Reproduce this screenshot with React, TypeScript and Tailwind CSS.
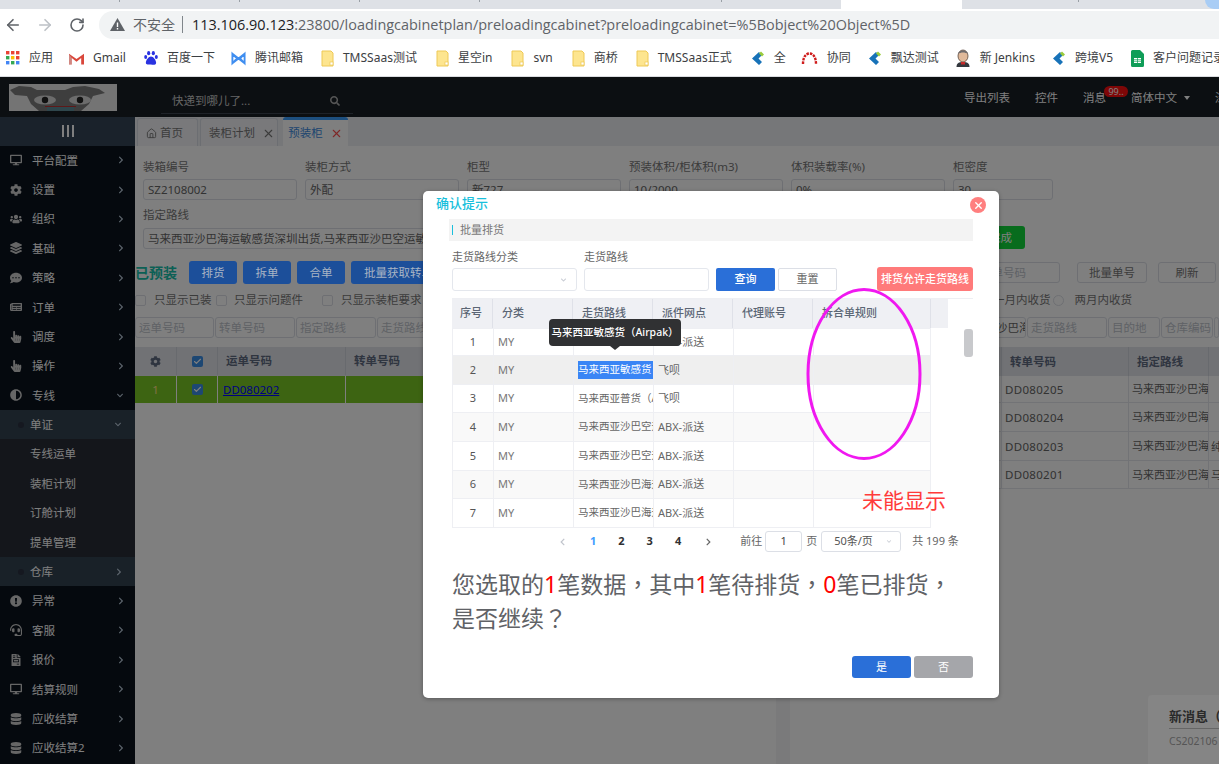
import React from "react";
import { FaDesktop, FaCog, FaUsers, FaLayerGroup, FaCommentDots, FaNewspaper, FaHandPointer, FaAdjust, FaExclamationCircle, FaHeadset, FaFileInvoice, FaDatabase, FaChevronRight, FaChevronDown, FaChevronLeft, FaSearch } from "react-icons/fa";
import { ArrowLeft, ArrowRight, RotateCw, X, Check, House } from "lucide-react";

const font = "font-['Noto_Sans','Noto_Sans_CJK_SC',sans-serif]";

function Folder() {
  return (
    <svg width="13" height="17" viewBox="0 0 13 17">
      <path d="M1 1h9l2 2v13H1z" fill="#fde58f" stroke="#eec957" strokeWidth="1" />
      <rect x="9" y="12" width="3" height="3" fill="#fff" stroke="#eec957" strokeWidth=".7" />
    </svg>
  );
}
function Diamond() {
  return (
    <svg width="14" height="17" viewBox="0 0 14 17">
      <path d="M8 2 1 8.500 8 15l3-3-3.500-3.500L11 5z" fill="#1772b8" />
      <path d="M10 1.500l3 3-2 2-3-3z" fill="#9acb3c" />
    </svg>
  );
}
const bookmarks: { icon: React.ReactNode; label: string; w: string; ml: string }[] = [
  { label: "应用", w: "w-[14px]", ml: "ml-[6px]", icon: (
    <svg width="14" height="14" viewBox="0 0 14 14">
      {[0, 1, 2].map((r) => [0, 1, 2].map((c) => (
        <rect key={r + "-" + c} x={c * 5} y={r * 5} width="3.400" height="3.400" fill={["#ea4335", "#ea4335", "#ea4335", "#34a853", "#fbbc05", "#ea4335", "#4285f4", "#34a853", "#4285f4"][r * 3 + c]} />
      )))}
    </svg>) },
  { label: "Gmail", w: "w-[15px]", ml: "ml-[16px]", icon: (
    <svg width="16" height="13" viewBox="0 0 16 13">
      <path d="M0 1.500 8 7l8-5.500V13h-3V6L8 10 3 6v7H0z" fill="#d9473b" />
      <path d="M3 6v7H0V2z" fill="#c7c7c7" opacity=".5" />
    </svg>) },
  { label: "百度一下", w: "w-[14px]", ml: "ml-[18px]", icon: (
    <svg width="15" height="16" viewBox="0 0 15 16" fill="#2932e1">
      <ellipse cx="5" cy="2.800" rx="1.700" ry="2.300" /><ellipse cx="10" cy="2.800" rx="1.700" ry="2.300" />
      <ellipse cx="1.800" cy="7" rx="1.600" ry="2.100" /><ellipse cx="13.200" cy="7" rx="1.600" ry="2.100" />
      <path d="M7.500 6.500c2.500 0 5.500 4 5.500 6.500S10 15.500 7.500 15 2 15.500 2 13s3-6.500 5.500-6.500z" />
    </svg>) },
  { label: "腾讯邮箱", w: "w-[15px]", ml: "ml-[16px]", icon: (
    <svg width="16" height="15" viewBox="0 0 16 15" fill="none" stroke="#3f8ef0" strokeWidth="2">
      <path d="M1.500 2.500v10l5-5zM14.500 2.500v10l-5-5zM1.500 2.500l13 10M14.500 2.500l-13 10" />
    </svg>) },
  { label: "TMSSaas测试", w: "w-[13px]", ml: "ml-[18px]", icon: <Folder /> },
  { label: "星空in", w: "w-[13px]", ml: "ml-[19px]", icon: <Folder /> },
  { label: "svn", w: "w-[13px]", ml: "ml-[19px]", icon: <Folder /> },
  { label: "商桥", w: "w-[13px]", ml: "ml-[19px]", icon: <Folder /> },
  { label: "TMSSaas正式", w: "w-[13px]", ml: "ml-[18px]", icon: <Folder /> },
  { label: "全", w: "w-[14px]", ml: "ml-[19px]", icon: <Diamond /> },
  { label: "协同", w: "w-[17px]", ml: "ml-[15px]", icon: (
    <svg width="17" height="13" viewBox="0 0 17 13" fill="none" stroke="#cf1b1b" strokeWidth="2.400" strokeDasharray="2.500 1"><path d="M2 12C2 5 5 1.500 8.500 1.500S15 5 15 12" /></svg>) },
  { label: "飘达测试", w: "w-[14px]", ml: "ml-[17px]", icon: <Diamond /> },
  { label: "新 Jenkins", w: "w-[16px]", ml: "ml-[16px]", icon: (
    <svg width="16" height="18" viewBox="0 0 16 18">
      <path d="M1.500 18c0-4 2.500-5 6.500-5s6.500 1 6.500 5z" fill="#33373d" />
      <ellipse cx="8" cy="7" rx="5" ry="6" fill="#e0b99a" stroke="#5a4537" strokeWidth=".8" />
      <path d="M3 5c1-5 9-5 10 0-3-2-7-2-10 0z" fill="#6d6b6d" />
      <rect x="6" y="13" width="4" height="2.500" fill="#c62828" />
    </svg>) },
  { label: "跨境V5", w: "w-[14px]", ml: "ml-[17px]", icon: <Diamond /> },
  { label: "客户问题记录", w: "w-[13px]", ml: "ml-[18px]", icon: (
    <svg width="13" height="17" viewBox="0 0 13 17">
      <path d="M0 1.500A1.500 1.500 0 0 1 1.500 0H9l4 4v11.500a1.500 1.500 0 0 1-1.500 1.500h-10A1.500 1.500 0 0 1 0 15.500z" fill="#0f9d58" />
      <path d="M3 8h7v5H3z" fill="#fff" /><path d="M3 9.700h7M3 11.300h7M6.500 8v5" stroke="#0f9d58" strokeWidth=".7" />
    </svg>) },
];

function Chrome() {
  return (
    <div className="shrink-0 bg-white">
      <div className="flex h-[9px] bg-[#dee1e6]">
        {["w-[120px]", "w-[120px]", "w-[120px]", "w-[120px]", "w-[242px]"].map((w, i) => (
          <div key={i} className={`${w} h-[2px] border-r border-[#9aa0a6]`} />
        ))}
        <div className="w-[119px]" />
        <div className="ml-0 h-full w-[121px] bg-white" />
        <div className="h-[2px] w-[117px] border-r border-[#9aa0a6]" />
        <div className="ml-auto h-[9px] w-[14px] rounded-bl-full bg-[#a9cdf5]" />
      </div>
      <div className="flex h-[31px] items-center">
        <ArrowLeft className="ml-[4px] h-[18px] w-[18px] text-[#5f6368]" strokeWidth={2.200} />
        <ArrowRight className="ml-[14px] h-[18px] w-[18px] text-[#bdc1c6]" strokeWidth={2.200} />
        <RotateCw className="ml-[15px] h-[16px] w-[16px] text-[#5f6368]" strokeWidth={2.400} />
        <div className="ml-[14px] flex h-[28px] flex-1 items-center rounded-l-full bg-[#f1f3f4] pl-[11px]">
          <svg width="15" height="13" viewBox="0 0 15 13"><path d="M7.500 0 15 13H0z" fill="#5f6368" /><path d="M6.800 4.500h1.400v4.500H6.800zM6.800 10h1.400v1.400H6.800z" fill="#fff" /></svg>
          <span className={`ml-[8px] text-[14px] text-[#5f6368] ${font}`}>不安全</span>
          <span className="ml-[7px] h-[17px] w-px bg-[#80868b]" />
          <span className="ml-[9px] whitespace-nowrap text-[14.450px] text-[#5f6368] font-['Open_Sans',sans-serif]">
            <span className="text-[#202124]">113.106.90.123</span>:23800/loadingcabinetplan/preloadingcabinet?preloadingcabinet=%5Bobject%20Object%5D
          </span>
        </div>
      </div>
      <div className={`flex h-[37px] items-center overflow-hidden whitespace-nowrap border-b border-[#dadce0] text-[12px] text-[#3c4043] ${font}`}>
        {bookmarks.map((b) => (
          <div key={b.label} className={`flex shrink-0 items-center ${b.ml}`}>
            <span className={`flex justify-center ${b.w}`}>{b.icon}</span>
            <span className="ml-[9px]">{b.label}</span>
          </div>
        ))}
      </div>
    </div>
  );
}

function Logo() {
  return (
    <svg width="108" height="27" viewBox="0 0 108 27">
      <rect width="108" height="27" fill="#e8e8e8" />
      <path d="M1 6 10 2l12 1 6 3h28l8-3 12-1 14 3 6 4-12 3-4 8-8 7H30l-8-7-4-8-12-1z" fill="#7c7c7c" />
      <ellipse cx="36" cy="16" rx="11" ry="4.500" fill="#d8d8d8" />
      <ellipse cx="71" cy="16" rx="11" ry="4.500" fill="#d8d8d8" />
      <circle cx="36" cy="16" r="3.200" fill="#222" /><circle cx="71" cy="16" r="3.200" fill="#222" />
      <path d="M38 23h27v4H38z" fill="#5f8c99" />
      <path d="M36 22.500h31" stroke="#b33" strokeWidth="1" />
    </svg>
  );
}

function Topbar() {
  return (
    <div className={`flex h-[40px] shrink-0 items-center whitespace-nowrap bg-[#181e24] text-[11.500px] text-white ${font}`}>
      <div className="ml-[9px] shrink-0"><Logo /></div>
      <div className="ml-[44px] mt-[7px] flex h-[27px] w-[192px] shrink-0 items-center justify-between border-b border-[#3c4450] pl-[11px] pr-[13px] pt-[2px] text-[#c8c8c8]">
        <span>快递到哪儿了...</span>
        <FaSearch className="h-[10px] w-[10px] text-[#aaa]" />
      </div>
      <div className="ml-[611px] mt-[2px] flex items-center">
        <span>导出列表</span>
        <span className="ml-[25px]">控件</span>
        <span className="relative ml-[25px]">
          消息
          <span className="absolute left-[21px] top-[-3px] flex h-[11px] w-[24px] items-center justify-center rounded-full bg-[#ff0f0f] text-[9px] leading-none">99..</span>
        </span>
        <span className="ml-[25px]">简体中文</span>
        <span className="ml-[7px] h-0 w-0 border-x-[3px] border-t-[4px] border-x-transparent border-t-white" />
        <span className="ml-[25px]">深色主题</span>
      </div>
    </div>
  );
}

const menuTop: [React.ReactNode, string][] = [
  [<FaDesktop />, "平台配置"], [<FaCog />, "设置"], [<FaUsers />, "组织"], [<FaLayerGroup />, "基础"], [<FaCommentDots />, "策略"],
  [<FaNewspaper />, "订单"], [<FaHandPointer />, "调度"], [<FaHandPointer />, "操作"],
];
const menuBottom: [React.ReactNode, string][] = [
  [<FaExclamationCircle />, "异常"], [<FaHeadset />, "客服"], [<FaFileInvoice />, "报价"], [<FaDesktop />, "结算规则"], [<FaDatabase />, "应收结算"], [<FaDatabase />, "应收结算2"],
];
function MenuRow({ icon, label, down }: { icon: React.ReactNode; label: string; down?: boolean }) {
  return (
    <div className="flex h-[29.400px] items-center pl-[10px] pr-[11px]">
      <span className="flex w-[12px] justify-center text-[12px] text-[#ccc]">{icon}</span>
      <span className="ml-[10px] flex-1">{label}</span>
      {down ? <FaChevronDown className="h-[7px] w-[8px] text-[#b8c8d8]" /> : <FaChevronRight className="h-[8px] w-[6px] text-[#b8c8d8]" />}
    </div>
  );
}
function SubParent({ label, down }: { label: string; down?: boolean }) {
  return (
    <div className="flex h-[29.400px] items-center bg-[#324250] pl-[18px] pr-[13px]">
      <span className="mr-[6px] h-[6px] w-[6px] rounded-full bg-[#2a3040]" />
      <span className="flex-1">{label}</span>
      {down ? <FaChevronDown className="h-[7px] w-[8px] text-[#b8c8d8]" /> : <FaChevronRight className="h-[8px] w-[6px] text-[#b8c8d8]" />}
    </div>
  );
}
function Sidebar() {
  return (
    <div className={`w-[135px] shrink-0 overflow-hidden bg-[#0a121c] text-[11.500px] text-white ${font}`}>
      <div className="flex h-[28.500px] items-center justify-center gap-[3px] bg-[#344456]">
        <span className="h-[12px] w-[2px] bg-white" /><span className="h-[12px] w-[2px] bg-white" /><span className="h-[12px] w-[2px] bg-white" />
      </div>
      {menuTop.map(([i, l]) => <MenuRow key={l} icon={i} label={l} />)}
      <MenuRow icon={<FaAdjust />} label="专线" down />
      <SubParent label="单证" down />
      <div className="bg-[#282c36]">
        {["专线运单", "装柜计划", "订舱计划", "提单管理"].map((s) => (
          <div key={s} className="flex h-[29.400px] items-center pl-[30px]">{s}</div>
        ))}
      </div>
      <SubParent label="仓库" />
      {menuBottom.map(([i, l]) => <MenuRow key={l} icon={i} label={l} />)}
    </div>
  );
}

function Field({ label, value, w }: { label: string; value: string; w: string }) {
  return (
    <div className={`${w} shrink-0`}>
      <div className="h-[20px] pt-[1px] text-[11.500px] leading-[14px] text-[#777]">{label}</div>
      <div className="flex h-[21px] items-center rounded-[3px] border border-[#dcdfe6] pl-[4px] text-[11.500px] text-[#666]">{value}</div>
    </div>
  );
}
function Btn({ t, w, left }: { t: string; w: string; left?: boolean }) {
  return <div className={`${w} relative z-[1] flex h-[23px] shrink-0 items-center overflow-hidden whitespace-nowrap rounded-[3px] bg-[#1c4f9a] text-[11.500px] text-[#a8b4c4] ${left ? "justify-start pl-[13px]" : "justify-center"}`}>{t}</div>;
}
function Check1() {
  return <span className="h-[11px] w-[11px] shrink-0 rounded-[2px] border border-[#dcdfe6]" />;
}
function Ph({ t, w, pl }: { t: string; w: string; pl?: string }) {
  return <div className={`${w} ${pl ?? "pl-[3px]"} flex h-[21px] shrink-0 items-center overflow-hidden whitespace-nowrap rounded-[3px] border border-[#dcdfe6] text-[11.500px] text-[#c0c4cc]`}>{t}</div>;
}
function CheckedBox() {
  return (
    <span className="flex h-[11px] w-[11px] items-center justify-center rounded-[2px] bg-[#3a8ee6]">
      <Check className="h-[9px] w-[9px] text-white" strokeWidth={3} />
    </span>
  );
}

function Main() {
  const rightRows = [
    ["DD080205", "h-[27px]", ""], ["DD080204", "h-[29px]", ""], ["DD080203", "h-[29px]", "纯"], ["DD080201", "h-[28px]", "马"],
  ];
  return (
    <div className={`flex min-w-0 flex-1 flex-col overflow-hidden bg-white text-[#777] ${font}`}>
      <div className="flex h-[29px] shrink-0 items-end gap-[2px] bg-[#eceef2] pl-[2px] text-[11.500px]">
        <div className="flex h-[28px] w-[61px] items-center gap-[3px] rounded-t-[3px] border border-b-0 border-[#d8dce5] bg-[#f2f3f6] pl-[8px] pt-[1px]"><House className="h-[11px] w-[11px]" />首页</div>
        <div className="flex h-[28px] w-[78px] items-center gap-[7px] rounded-t-[3px] border border-b-0 border-[#d8dce5] bg-[#f2f3f6] pl-[8px] pt-[1px]">装柜计划<X className="h-[13px] w-[13px]" /></div>
        <div className="ml-[3px] flex h-[29px] w-[65px] items-center justify-center gap-[7px] rounded-t-[3px] border-t-[3px] border-[#3a9eff] bg-white text-[#3d8ce0]">预装柜<X className="h-[13px] w-[13px] text-[#ff5050]" /></div>
      </div>
      <div className="flex shrink-0 gap-[8px] pl-[8px] pt-[13px]">
        <Field w="w-[154px]" label="装箱编号" value="SZ2108002" />
        <Field w="w-[154px]" label="装柜方式" value="外配" />
        <Field w="w-[154px]" label="柜型" value="新727" />
        <Field w="w-[154px]" label="预装体积/柜体积(m3)" value="10/2000" />
        <Field w="w-[154px]" label="体积装载率(%)" value="0%" />
        <Field w="w-[100px]" label="柜密度" value="30" />
      </div>
      <div className="flex shrink-0 items-end pl-[8px] pt-[8px]">
        <div className="w-[836px] shrink-0">
          <div className="h-[20px] text-[11.500px] leading-[14px] text-[#777]">指定路线</div>
          <div className="flex h-[21px] items-center overflow-hidden whitespace-nowrap rounded-[3px] border border-[#dcdfe6] pl-[4px] text-[11.500px] text-[#666]">马来西亚沙巴海运敏感货深圳出货,马来西亚沙巴空运敏感货深圳出货</div>
        </div>
        <div className="ml-[8px] flex h-[23px] w-[38px] items-center justify-end rounded-[3px] bg-[#10d83a] pr-[13px] text-[11.500px] text-white">完成</div>
      </div>
      <div className="mt-[12px] flex h-[23px] shrink-0 items-center">
        <span className="w-[48px] text-[14px] font-bold text-[#16c0aa]">已预装</span>
        <span className="ml-[6px] flex gap-[6px]">
          <Btn w="w-[48px]" t="排货" /><Btn w="w-[48px]" t="拆单" /><Btn w="w-[48px]" t="合单" /><Btn w="w-[110px]" t="批量获取转单号" left />
        </span>
        <span className="ml-auto flex items-center gap-[11px]">
          <Ph w="w-[100px]" pl="pl-[19px]" t="转单号码" />
          <span className="ml-[6px] flex h-[21px] w-[70px] items-center justify-center rounded-[3px] border border-[#dcdfe6] text-[11.500px]">批量单号</span>
          <span className="mr-[3px] flex h-[21px] w-[58px] items-center justify-center rounded-[3px] border border-[#dcdfe6] text-[11.500px]">刷新</span>
        </span>
      </div>
      <div className="mt-[5px] flex h-[22px] shrink-0 items-center whitespace-nowrap text-[11.500px]">
        <Check1 /><span className="ml-[8px] w-[62px]">只显示已装</span>
        <Check1 /><span className="ml-[7px] w-[88px]">只显示问题件</span>
        <Check1 /><span className="ml-[8px] w-[70px]">只显示装柜要求</span>
        <span className="ml-auto mr-[3px] flex items-center">
          <span>一月内收货</span>
          <span className="ml-[2px] h-[11px] w-[11px] rounded-full border border-[#dcdfe6]" />
          <span className="ml-[11px]">两月内收货</span>
          <span className="w-[84px]" />
        </span>
      </div>
      <div className="mt-[6px] flex shrink-0 gap-[1px]">
        <Ph w="w-[79px]" t="运单号码" /><Ph w="w-[80px]" t="转单号码" /><Ph w="w-[80px]" t="指定路线" /><Ph w="w-[80px]" t="走货路线" />
        <span className="flex-1" />
        <span className="flex h-[21px] w-[80px] shrink-0 items-center overflow-hidden whitespace-nowrap rounded-[3px] border border-[#dcdfe6] pl-[3px] text-[11.500px] text-[#666]">马来西亚沙巴海运</span>
        <Ph w="w-[80px]" t="走货路线" /><Ph w="w-[52px]" t="目的地" /><Ph w="w-[52px]" t="仓库编码" /><Ph w="w-[5px]" t="" />
      </div>
      <div className="mt-[9px] flex min-h-0 flex-1 text-[11.500px]">
        <div className="w-[641px] shrink-0">
          <div className="flex h-[29px] items-center border-b border-[#e4e7ed] bg-[#e2e5eb] font-bold text-[#5f6a80]">
            <span className="flex h-full w-[42px] items-center justify-center border-r border-[#d0d4dc]"><FaCog className="h-[11px] w-[11px]" /></span>
            <span className="flex h-full w-[41px] items-center justify-center border-r border-[#d0d4dc]"><CheckedBox /></span>
            <span className="flex h-full w-[128px] items-center border-r border-[#d0d4dc] pl-[8px]">运单号码</span>
            <span className="pl-[8px]">转单号码</span>
          </div>
          <div className="flex h-[27px] items-center bg-[#7ac824]">
            <span className="flex h-full w-[42px] items-center justify-center border-r border-white text-[#ffe28a]">1</span>
            <span className="flex h-full w-[41px] items-center justify-center border-r border-white"><CheckedBox /></span>
            <span className="flex h-full w-[128px] items-center border-r border-white pl-[5px] text-[#0000ff] underline">DD080202</span>
          </div>
        </div>
        <div className="w-[14px] shrink-0 bg-[#f4f4f6]" />
        <div className="min-w-0 flex-1 overflow-hidden">
          <div className="flex h-[29px] items-center bg-[#e2e5eb] font-bold text-[#5f6a80]">
            <span className="flex h-full w-[212px] items-center justify-end border-r border-[#d0d4dc]" />
            <span className="flex h-full w-[127px] shrink-0 items-center border-r border-[#d0d4dc] pl-[8px]">转单号码</span>
            <span className="flex h-full w-[80px] shrink-0 items-center border-r border-[#d0d4dc] pl-[8px]">指定路线</span>
          </div>
          {rightRows.map(([a, h, c]) => (
            <div key={a} className={`flex ${h} items-center border-b border-[#e4e7ed] text-[#666]`}>
              <span className="h-full w-[212px] shrink-0 border-r border-[#e4e7ed]" />
              <span className="flex h-full w-[127px] shrink-0 items-center border-r border-[#e4e7ed] pl-[3px] pt-[1px] tracking-[0.3px]">{a}</span>
              <span className="flex h-full w-[80px] shrink-0 items-center overflow-hidden whitespace-nowrap border-r border-[#e4e7ed] pl-[3px] pt-[1px] text-[11px]">马来西亚沙巴海运</span>
              <span className="pl-[2px] pt-[1px]">{c}</span>
            </div>
          ))}
        </div>
      </div>
    </div>
  );
}

const rows: { h: string; n: string; r: string; s: string; bg: string }[] = [
  { h: "h-[27px]", n: "1", r: "", s: "ABX-派送", bg: "bg-white" },
  { h: "h-[29px]", n: "2", r: "马来西亚敏感货", s: "飞呗", bg: "bg-[#efefef]" },
  { h: "h-[28px]", n: "3", r: "马来西亚普货（Airpak）", s: "飞呗", bg: "bg-white" },
  { h: "h-[29px]", n: "4", r: "马来西亚沙巴空运敏感货", s: "ABX-派送", bg: "bg-[#f9f9f9]" },
  { h: "h-[29px]", n: "5", r: "马来西亚沙巴空运普货", s: "ABX-派送", bg: "bg-white" },
  { h: "h-[28px]", n: "6", r: "马来西亚沙巴海运敏感货", s: "ABX-派送", bg: "bg-[#f9f9f9]" },
  { h: "h-[29px]", n: "7", r: "马来西亚沙巴海运普货", s: "ABX-派送", bg: "bg-white" },
];
const cols = ["w-[41px]", "w-[80px]", "w-[80px]", "w-[80px]", "w-[80px]", "w-[118px]"];
const tc = "font-['Noto_Sans_CJK_TC',sans-serif]";

function Modal() {
  return (
    <div className={`absolute left-[423px] top-[114px] z-10 h-[507px] w-[576px] rounded-[5px] bg-white shadow-[0_1px_4px_rgba(0,0,0,0.3)] ${font}`}>
      <div className="flex h-[28px] items-center justify-between pl-[13px] pr-[13px]">
        <span className="mb-[3px] text-[13px] font-medium text-[#19bfdc]">确认提示</span>
        <span className="flex h-[16px] w-[16px] items-center justify-center rounded-full bg-[#ff7f7f]"><X className="h-[11px] w-[11px] text-white" strokeWidth={3} /></span>
      </div>
      <div className="ml-[26px] flex h-[22px] w-[524px] items-center bg-[#f3f3f3]">
        <span className="ml-[3px] h-[10px] w-px bg-[#19bfdc]" />
        <span className="ml-[7px] text-[11px] text-[#777]">批量排货</span>
      </div>
      <div className="ml-[29px] mr-[26px] mt-[8px] flex items-end">
        <div className="w-[125px]">
          <div className="mb-[4px] text-[11px] leading-[15px] text-[#666]">走货路线分类</div>
          <div className="flex h-[23px] items-center justify-end rounded-[3px] border border-[#e4e7ed] pr-[8px]"><FaChevronDown className="h-[6px] w-[9px] text-[#c8ccd4]" /></div>
        </div>
        <div className="ml-[7px] w-[125px]">
          <div className="mb-[4px] text-[11px] leading-[15px] text-[#666]">走货路线</div>
          <div className="h-[23px] rounded-[3px] border border-[#e4e7ed]" />
        </div>
        <div className="ml-[7px] flex h-[23px] w-[59px] items-center justify-center rounded-[2px] bg-[#2a6fd8] text-[11px] font-medium text-white">查询</div>
        <div className="ml-[3px] flex h-[23px] w-[59px] items-center justify-center rounded-[2px] border border-[#dcdfe6] text-[11px] text-[#666]">重置</div>
        <div className="ml-auto flex h-[24px] w-[96px] items-center justify-center whitespace-nowrap rounded-[3px] bg-[#ff7a7a] text-[11px] font-medium text-white">排货允许走货路线</div>
      </div>
      <div className="relative ml-[29px] mr-[26px] mt-[7px] border-t border-[#eeeff3] text-[11px] text-[#666]">
        <div className="flex h-[29px] w-[496px] items-center bg-[#eff0f4] font-medium text-[#5b6675]">
          <span className={`${cols[0]} flex h-full items-center border-r border-[#dfe1e8] pl-[8px]`}>序号</span>
          {["分类", "走货路线", "派件网点", "代理账号", "拆合单规则"].map((h, i) => (
            <span key={h} className={`${cols[i + 1]} flex h-full items-center border-r border-[#dfe1e8] pl-[9px]`}>{h}</span>
          ))}
        </div>
        <div className="w-[479px] border-b border-l border-[#eeeff3]">
          {rows.map((r) => (
            <div key={r.n} className={`flex ${r.h} ${r.bg} items-center border-t border-[#eeeff3]`}>
              <span className="flex h-full w-[41px] shrink-0 items-center justify-center border-r border-[#eeeff3] text-[#555]">{r.n}</span>
              <span className="flex h-full w-[80px] shrink-0 items-center border-r border-[#eeeff3] pl-[4px] text-[#777]">MY</span>
              <span className="flex h-full w-[80px] shrink-0 items-center overflow-hidden whitespace-nowrap border-r border-[#eeeff3] pl-[4px] text-[10.500px]">
                {r.n === "2" ? <span className="flex h-[18px] w-[76px] items-center bg-[#3a85f5] text-white">{r.r}</span> : r.r}
              </span>
              <span className="flex h-full w-[80px] shrink-0 items-center overflow-hidden whitespace-nowrap border-r border-[#eeeff3] pl-[4px]">{r.s}</span>
              <span className="h-full w-[80px] shrink-0 border-r border-[#eeeff3]" />
              <span className="h-full w-[117px] shrink-0 border-r border-[#eeeff3]" />
            </div>
          ))}
        </div>
        <div className="absolute left-[512px] top-[30px] h-[28px] w-[9px] rounded-[3px] bg-[#c8c9cc]" />
        <div className="absolute left-[97px] top-[20px] flex h-[27px] w-[132px] items-center justify-center whitespace-nowrap rounded-[4px] bg-[#303133] text-[10.500px] font-medium text-white">
          马来西亚敏感货（Airpak）
          <span className="absolute bottom-[-4px] left-[61px] h-0 w-0 border-x-[5px] border-t-[4px] border-x-transparent border-t-[#303133]" />
        </div>
      </div>
      <div className="ml-[29px] mt-[3px] flex h-[21px] items-center whitespace-nowrap text-[11px] text-[#666]">
        <FaChevronLeft className="ml-[108px] h-[8px] w-[5px] text-[#c0c4cc]" />
        <span className="ml-[25px] font-bold text-[#409eff]">1</span>
        <span className="ml-[22px] font-bold text-[#303133]">2</span>
        <span className="ml-[22px] font-bold text-[#303133]">3</span>
        <span className="ml-[22px] font-bold text-[#303133]">4</span>
        <FaChevronRight className="ml-[25px] h-[8px] w-[5px] text-[#666]" />
        <span className="ml-[29px]">前往</span>
        <span className="ml-[3px] flex h-[21px] w-[37px] items-center justify-center rounded-[3px] border border-[#dcdfe6] text-[#444]">1</span>
        <span className="ml-[4px]">页</span>
        <span className="ml-[4px] flex h-[21px] w-[80px] items-center justify-between rounded-[3px] border border-[#dcdfe6] pl-[12px] pr-[7px] text-[#555]">50条/页<FaChevronDown className="h-[5px] w-[8px] text-[#c8ccd4]" /></span>
        <span className="ml-[11px]">共 199 条</span>
      </div>
      <div className="ml-[29px] mt-[15px] w-[510px] text-[23px] leading-[33px] text-[#606266]">
        您选取的<span className="text-[#ff0000]">1</span>笔数据<span className={tc}>，</span>其中<span className="text-[#ff0000]">1</span>笔待排货<span className={tc}>，</span><span className="text-[#ff0000]">0</span>笔已排货<span className={tc}>，</span>是否继续<span className={tc}>？</span>
      </div>
      <div className="mr-[26px] mt-[21px] flex justify-end gap-[3px] text-[11px] text-white">
        <span className="flex h-[22px] w-[59px] items-center justify-center rounded-[3px] bg-[#2a6fd8]">是</span>
        <span className="flex h-[22px] w-[59px] items-center justify-center rounded-[3px] bg-[#a5a6aa]">否</span>
      </div>
    </div>
  );
}

export default function App() {
  return (
    <div className="flex h-[764px] w-[1219px] flex-col overflow-hidden">
      <Chrome />
      <div className="relative min-h-0 flex-1 overflow-hidden">
        <div className="flex h-full flex-col">
          <Topbar />
          <div className="flex min-h-0 flex-1">
            <Sidebar />
            <Main />
          </div>
        </div>
        <div className="absolute inset-0 bg-black/50" />
        <div className={`absolute bottom-0 left-[1148px] top-[618px] w-[80px] rounded-tl-[4px] bg-[#858585] pl-[21px] pt-[12px] ${font}`}>
          <div className="h-[22px] w-full whitespace-nowrap border-b border-[#666] text-[13px] font-bold text-[#2a2a2a]">新消息（</div>
          <div className="mt-[5px] whitespace-nowrap text-[10.500px] text-[#555]">CS202106</div>
        </div>
        <Modal />
        <svg className="absolute left-[805px] top-[210px] z-20" width="118" height="175" viewBox="0 0 118 175" fill="none">
          <ellipse cx="59" cy="87" rx="56" ry="84.500" stroke="#f018f0" strokeWidth="3" />
        </svg>
        <div className={`absolute left-[862px] top-[408px] z-20 text-[21px] leading-[30px] text-[#ff3b3b] ${font}`}>未能显示</div>
      </div>
    </div>
  );
}
